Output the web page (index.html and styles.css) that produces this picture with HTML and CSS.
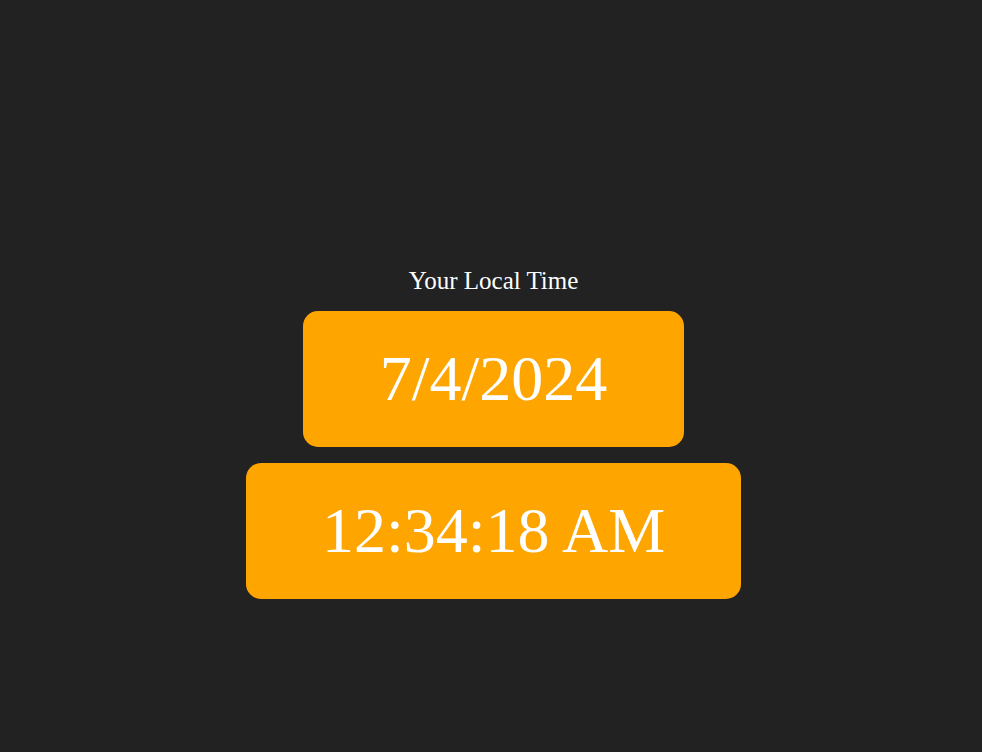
FILE: index.html
```html
<!DOCTYPE html>
<html>
<head>
<meta charset="utf-8">
<link rel="stylesheet" href="styles.css">
</head>
<body>
<main class="clock">
  <div class="title">Your Local Time</div>
  <div class="box date">7/4/2024</div>
  <div class="box time">12:34:18 AM</div>
</main>
</body>
</html>
```

FILE: styles.css
```css
html, body {
  margin: 0;
  padding: 0;
  background: #222222;
  height: 100%;
}
body {
  font-family: "Liberation Serif", "Times New Roman", serif;
  color: #ffffff;
}
.clock {
  display: flex;
  flex-direction: column;
  align-items: center;
  padding-top: 267px;
  padding-left: 5px;
}
.title {
  font-size: 25px;
  margin-bottom: 16px;
}
.box {
  background: #ffa500;
  color: #ffffff;
  font-size: 64px;
  border-radius: 15px;
  padding: 31px 76.5px;
}
.date {
  margin-bottom: 16px;
}
.time {
  padding-left: 75.5px;
  padding-right: 75.5px;
}
```
